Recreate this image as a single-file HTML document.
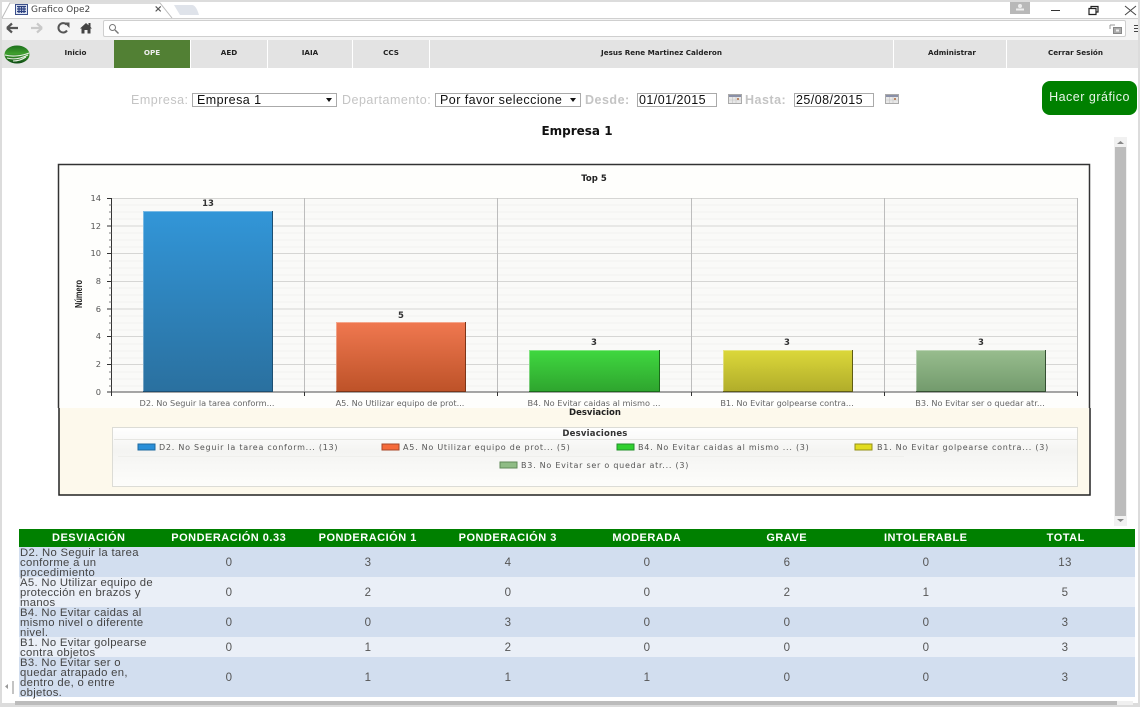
<!DOCTYPE html>
<html><head><meta charset="utf-8"><style>
*{box-sizing:border-box}
html,body{margin:0;padding:0;width:1140px;height:707px;overflow:hidden;background:#fff;font-family:"Liberation Sans",sans-serif}
.a{position:absolute}
.nav{position:absolute;top:40px;height:28px;background:#e3e3e3;font:bold 7.2px/25px "DejaVu Sans",sans-serif;text-align:center;color:#222}
.lb{position:absolute;top:93px;font-size:12.5px;line-height:14px;color:#c4c4c4;letter-spacing:.5px}
.sel{position:absolute;top:93px;height:14px;background:#fff;border:1px solid #aaa;font-size:12.5px;line-height:12px;padding-left:4px;color:#111;letter-spacing:.45px}
.sel i{position:absolute;right:4px;top:4px;width:0;height:0;border:3px solid transparent;border-top:4px solid #111;border-bottom:0}
.th{position:absolute;top:529px;height:18px;width:139.5px;text-align:center;color:#fff;font-weight:bold;font-size:11px;line-height:18px;letter-spacing:.5px}
.r{position:absolute;left:19px;width:1116px}
.t{position:absolute;left:20px;font-size:11.3px;line-height:10px;color:#444;letter-spacing:.32px;white-space:nowrap}
.n{position:absolute;width:40px;text-align:center;font-size:11.5px;line-height:12px;color:#555;letter-spacing:.3px}
</style></head><body>
<div class="a" style="left:0;top:0;width:1140px;height:2px;background:#dcdcdc"></div>
<div class="a" style="left:0;top:0;width:2px;height:707px;background:#dcdcdc"></div>
<div class="a" style="left:1138px;top:0;width:2px;height:707px;background:#dcdcdc"></div>
<div class="a" style="left:0;top:703px;width:1140px;height:4px;background:#dcdcdc"></div>
<!-- tab strip -->
<div class="a" style="left:2px;top:18px;width:1136px;height:22px;background:#f4f4f4;border-top:1px solid #d0d0d0"></div>
<svg class="a" style="left:0;top:2px" width="210" height="18"><path d="M2 16 L10 1 H160 L172 16" fill="#fff" stroke="#bbb"/><path d="M174 3 H192 Q196 3 199 13 H180 Z" fill="#dfe3ea"/></svg>
<svg class="a" style="left:15px;top:4px" width="13" height="11"><rect x=".5" y=".5" width="12" height="10" fill="#dfe6f2" stroke="#3b4f8a"/><path d="M2 2.5H11M2 5H11M2 7.5H11M4 2V9M6.500 2V9M9 2V9" stroke="#2a3f80" stroke-width="1.200"/></svg>
<div class="a" style="left:31px;top:4px;font:9px/12px 'DejaVu Sans',sans-serif;color:#444">Grafico Ope2</div>
<div class="a" style="left:154px;top:4px;font:bold 10px/12px 'DejaVu Sans',sans-serif;color:#555">×</div>
<div class="a" style="left:1010px;top:2px;width:20px;height:12px;background:#b8b8b8"></div>
<svg class="a" style="left:1014px;top:3px" width="12" height="9"><circle cx="6" cy="3" r="2" fill="#eee"/><rect x="2" y="5.500" width="8" height="2" fill="#eee"/></svg>
<svg class="a" style="left:1048px;top:4px" width="90" height="12"><path d="M3 6.500H12" stroke="#333"/><path d="M41 4.500H48V10.500H41ZM43 4V2.500H50V8H48" fill="none" stroke="#222" stroke-width="1.200"/><path d="M77 2L88 11M88 2L77 11" stroke="#444"/></svg>
<!-- toolbar -->
<svg class="a" style="left:4px;top:20px" width="92" height="16"><path d="M3 8H14M3 8L8 3.500M3 8L8 12.500" stroke="#555" stroke-width="2.200" fill="none"/><path d="M27 8H38M38 8L33 3.500M38 8L33 12.500" stroke="#c9c9c9" stroke-width="2.200" fill="none"/><path d="M62.500 4.500A4.700 4.700 0 1 0 63 10.500" stroke="#555" stroke-width="2" fill="none"/><path d="M60 2.500L65.500 2.500L65.500 8Z" fill="#555"/><path d="M76 8.500L82 3L84.500 5.300V3H86.500V7L88 8.500H86.500V13.500H83.500V10H80.500V13.500H77.500V8.500Z" fill="#444"/></svg>
<div class="a" style="left:103px;top:20px;width:1023px;height:17px;background:#fff;border:1px solid #cfcfcf;border-radius:2px"></div>
<svg class="a" style="left:108px;top:23px" width="12" height="12"><circle cx="4.500" cy="4.500" r="3" fill="none" stroke="#777"/><path d="M7 7L10.500 10.500" stroke="#777" stroke-width="1.400"/></svg>
<svg class="a" style="left:1109px;top:24px" width="13" height="10"><rect x="4.500" y="3.500" width="8" height="6" fill="#aaa" stroke="#888"/><path d="M1 1H6M1 1V5" stroke="#999" fill="none"/><rect x="7" y="5.500" width="3" height="2" fill="#eee"/></svg>
<svg class="a" style="left:1134px;top:24px" width="4" height="10"><path d="M0 1.500H4M0 4.500H4M0 7.500H4" stroke="#444"/></svg>
<!-- nav -->
<div class="a" style="left:2px;top:40px;width:1136px;height:28px;background:#e3e3e3"></div>
<svg class="a" style="left:4px;top:45px" width="26" height="19"><defs><linearGradient id="lg" x1="0" y1="0" x2="0" y2="1"><stop offset="0" stop-color="#1c6f1c"/><stop offset=".45" stop-color="#3f9f2e"/><stop offset="1" stop-color="#0d4a12"/></linearGradient></defs><ellipse cx="13" cy="9.500" rx="12.500" ry="9" fill="url(#lg)"/><path d="M1 10C8 12 18 11 25 8M3 13C10 15 18 13 24 10M9 16C14 16 19 14 22 12" stroke="#e8eee4" stroke-width="1.100" fill="none"/></svg>
<div class="nav" style="left:38px;width:75px">Inicio</div>
<div class="nav" style="left:114px;width:76px;background:#528034;color:#eee">OPE</div>
<div class="nav" style="left:191px;width:76px">AED</div>
<div class="nav" style="left:268px;width:84px">IAIA</div>
<div class="nav" style="left:353px;width:76px">CCS</div>
<div class="nav" style="left:430px;width:463px">Jesus Rene Martinez Calderon</div>
<div class="nav" style="left:896px;width:112px">Administrar</div>
<div class="nav" style="left:1010px;width:131px;background:transparent">Cerrar Sesión</div>
<div class="a" style="left:190px;top:40px;width:1px;height:28px;background:#fff"></div>
<div class="a" style="left:267px;top:40px;width:1px;height:28px;background:#fff"></div>
<div class="a" style="left:352px;top:40px;width:1px;height:28px;background:#fff"></div>
<div class="a" style="left:429px;top:40px;width:1px;height:28px;background:#fff"></div>
<div class="a" style="left:893px;top:40px;width:1px;height:28px;background:#fff"></div>
<div class="a" style="left:1006px;top:40px;width:1px;height:28px;background:#fff"></div>
<!-- form -->
<div class="lb" style="left:131px">Empresa:</div>
<div class="sel" style="left:192px;width:145px">Empresa 1<i></i></div>
<div class="lb" style="left:342px">Departamento:</div>
<div class="sel" style="left:435px;width:146px">Por favor seleccione<i></i></div>
<div class="lb" style="left:585px;font-weight:bold">Desde:</div>
<div class="sel" style="left:637px;width:80px;padding-left:1px">01/01/2015</div>
<div class="lb" style="left:745px;font-weight:bold">Hasta:</div>
<div class="sel" style="left:794px;width:80px;padding-left:1px">25/08/2015</div>
<svg class="a" style="left:728px;top:94px" width="14" height="10"><rect x=".5" y=".5" width="13" height="9" fill="#e8e8e8" stroke="#aaa"/><rect x="1" y="1" width="12" height="2" fill="#8a90a8"/><path d="M4.500 3V9M8 3V9M1 6H13" stroke="#c4c4c4" stroke-width=".6"/><rect x="9" y="4" width="2" height="2" fill="#b86"/></svg>
<svg class="a" style="left:885px;top:94px" width="14" height="10"><rect x=".5" y=".5" width="13" height="9" fill="#e8e8e8" stroke="#aaa"/><rect x="1" y="1" width="12" height="2" fill="#8a90a8"/><path d="M4.500 3V9M8 3V9M1 6H13" stroke="#c4c4c4" stroke-width=".6"/><rect x="9" y="4" width="2" height="2" fill="#b86"/></svg>
<div class="a" style="left:1042px;top:81px;width:95px;height:34px;background:#008000;border-radius:8px;color:#e8f4e8;font-size:12.500px;line-height:32px;text-align:center;letter-spacing:.5px">Hacer gráfico</div>
<div class="a" style="left:0;top:124px;width:1154px;text-align:center;font:bold 12px/14px 'DejaVu Sans',sans-serif;color:#111">Empresa 1</div>
<!-- scrollbar -->
<div class="a" style="left:1114px;top:137px;width:13px;height:389px;background:#f1f1f1"></div>
<div class="a" style="left:1115px;top:147px;width:11px;height:369px;background:#bcbcbc"></div>
<svg class="a" style="left:1116px;top:140px" width="9" height="5"><path d="M1 4L4.500 1L8 4Z" fill="#888"/></svg>
<svg class="a" style="left:1116px;top:518px" width="9" height="5"><path d="M1 1L4.500 4L8 1Z" fill="#888"/></svg>
<!-- chart -->
<svg class="a" style="left:0;top:0" width="1140" height="707" font-family="DejaVu Sans, sans-serif">
<defs>
<linearGradient id="b1" x1="0" y1="0" x2="0" y2="1"><stop offset="0" stop-color="#3296d8"/><stop offset="1" stop-color="#2a709f"/></linearGradient>
<linearGradient id="b2" x1="0" y1="0" x2="0" y2="1"><stop offset="0" stop-color="#f07850"/><stop offset="1" stop-color="#bd5228"/></linearGradient>
<linearGradient id="b3" x1="0" y1="0" x2="0" y2="1"><stop offset="0" stop-color="#40d840"/><stop offset="1" stop-color="#2ea42e"/></linearGradient>
<linearGradient id="b4" x1="0" y1="0" x2="0" y2="1"><stop offset="0" stop-color="#dcd83a"/><stop offset="1" stop-color="#b0ac2a"/></linearGradient>
<linearGradient id="b5" x1="0" y1="0" x2="0" y2="1"><stop offset="0" stop-color="#98bd8e"/><stop offset="1" stop-color="#729a6c"/></linearGradient>
<linearGradient id="lgb" x1="0" y1="0" x2="0" y2="1"><stop offset="0" stop-color="#fff"/><stop offset=".4" stop-color="#f4f4f2"/><stop offset="1" stop-color="#fdfdfb"/></linearGradient>
</defs>
<rect x="59" y="165" width="1030" height="243" fill="#fefefc"/>
<rect x="59" y="408" width="1030" height="87" fill="#fdf9ec"/>
<path d="M58.500 408V164.500H1089.500V408" fill="none" stroke="#333" stroke-width="1.500"/>
<path d="M59 408V495H1090V408" fill="none" stroke="#222" stroke-width="1.500"/>
<text x="594" y="181" font-size="8.500" font-weight="bold" text-anchor="middle" fill="#222">Top 5</text>
<rect x="112" y="198" width="966" height="194" fill="#fafaf8"/>
<g stroke="#f2f2f0"><path d="M112 205H1078M112 212H1078M112 219H1078M112 233H1078M112 240H1078M112 247H1078M112 261H1078M112 268H1078M112 275H1078M112 288H1078M112 295H1078M112 302H1078M112 316H1078M112 323H1078M112 330H1078M112 344H1078M112 351H1078M112 358H1078M112 372H1078M112 379H1078M112 386H1078"/></g>
<g stroke="#d6d6d4"><path d="M112 198.500H1078M112 226H1078M112 253.500H1078M112 281.500H1078M112 309H1078M112 336.500H1078M112 364.500H1078"/></g>
<path d="M304.500 198V392M497.500 198V392M691.500 198V392M884.500 198V392M1077.500 198V392" stroke="#bdbdbd"/>
<path d="M112 392H1078" stroke="#888" stroke-width="1.500"/>
<path d="M111.500 198V396M304.500 392V396M497.500 392V396M691.500 392V396M884.500 392V396M1077.500 392V396" stroke="#333"/>
<path d="M107 198.500H112M107 226H112M107 253.500H112M107 281.500H112M107 309H112M107 336.500H112M107 364.500H112M107 392H112" stroke="#333"/>
<path d="M109 205H112M109 212H112M109 219H112M109 233H112M109 240H112M109 247H112M109 261H112M109 268H112M109 275H112M109 288H112M109 295H112M109 302H112M109 316H112M109 323H112M109 330H112M109 344H112M109 351H112M109 358H112M109 372H112M109 379H112M109 386H112" stroke="#555" stroke-width=".7"/>
<g font-size="8.300" fill="#555" text-anchor="end"><text x="101" y="201">14</text><text x="101" y="229">12</text><text x="101" y="256">10</text><text x="101" y="284">8</text><text x="101" y="312">6</text><text x="101" y="339">4</text><text x="101" y="367">2</text><text x="101" y="395">0</text></g>
<text x="0" y="0" transform="translate(82,308) rotate(-90)" font-family="Liberation Sans, sans-serif" font-size="10" font-weight="bold" fill="#222" textLength="28" lengthAdjust="spacingAndGlyphs">Número</text>
<rect x="143" y="211" width="130" height="181" fill="url(#b1)"/>
<rect x="336" y="322" width="130" height="70" fill="url(#b2)"/>
<rect x="529" y="350" width="131" height="42" fill="url(#b3)"/>
<rect x="723" y="350" width="130" height="42" fill="url(#b4)"/>
<rect x="916" y="350" width="130" height="42" fill="url(#b5)"/>
<g fill="none" stroke="#fff" stroke-opacity=".35"><path d="M143.500 392V211.500H272M336.500 392V322.500H465M529.500 392V350.500H659M723.500 392V350.500H852M916.500 392V350.500H1045"/></g>
<path d="M143 391.500H272.500V211" fill="none" stroke="#1d4f72"/>
<path d="M336 391.500H465.500V322" fill="none" stroke="#7c3518"/>
<path d="M529 391.500H659.500V350" fill="none" stroke="#1a6a1a"/>
<path d="M723 391.500H852.500V350" fill="none" stroke="#5f5c14"/>
<path d="M916 391.500H1045.500V350" fill="none" stroke="#354f32"/>
<g font-size="8.500" font-weight="bold" fill="#333" text-anchor="middle"><text x="208" y="206">13</text><text x="401" y="318">5</text><text x="594" y="345">3</text><text x="787" y="345">3</text><text x="981" y="345">3</text></g>
<g font-size="8.200" fill="#666" text-anchor="middle"><text x="207" y="406">D2. No Seguir la tarea conform...</text><text x="400" y="406">A5. No Utilizar equipo de prot...</text><text x="594" y="406">B4. No Evitar caidas al mismo ...</text><text x="787" y="406">B1. No Evitar golpearse contra...</text><text x="980" y="406">B3. No Evitar ser o quedar atr...</text></g>
<text x="595" y="415" font-size="8.500" font-weight="bold" text-anchor="middle" fill="#222">Desviacion</text>
<rect x="112.500" y="427.500" width="965" height="59" fill="url(#lgb)" stroke="#dcdcd6"/>
<text x="595" y="436" font-size="8.500" font-weight="bold" text-anchor="middle" fill="#333" letter-spacing=".2">Desviaciones</text>
<path d="M114 439.500H1077" stroke="#e6e6e2"/><path d="M118 456.500H904" stroke="#efefec"/>
<rect x="138" y="444" width="17" height="6" fill="#2a8fd8" stroke="#1f6a9f"/>
<rect x="382" y="444" width="17" height="6" fill="#f56a3a" stroke="#a8482a"/>
<rect x="617" y="444" width="17" height="6" fill="#30d030" stroke="#22902a"/>
<rect x="855" y="444" width="17" height="6" fill="#e2dc20" stroke="#948f18"/>
<rect x="500" y="462" width="17" height="6" fill="#8fbc85" stroke="#5f8a58"/>
<g font-size="8" fill="#555" letter-spacing=".75"><text x="159" y="450">D2. No Seguir la tarea conform... (13)</text><text x="403" y="450">A5. No Utilizar equipo de prot... (5)</text><text x="638" y="450">B4. No Evitar caidas al mismo ... (3)</text><text x="877" y="450">B1. No Evitar golpearse contra... (3)</text><text x="521" y="468">B3. No Evitar ser o quedar atr... (3)</text></g>
</svg>
<!-- table -->
<div class="r" style="top:529px;height:18px;background:#008000"></div>
<div class="r" style="top:547px;height:30px;background:#d2deef"></div>
<div class="r" style="top:577px;height:30px;background:#eaeff7"></div>
<div class="r" style="top:607px;height:30px;background:#d2deef"></div>
<div class="r" style="top:637px;height:20px;background:#eaeff7"></div>
<div class="r" style="top:657px;height:40px;background:#d2deef"></div>
<div class="th" style="left:19px">DESVIACIÓN</div>
<div class="th" style="left:159px">PONDERACIÓN 0.33</div>
<div class="th" style="left:298px">PONDERACIÓN 1</div>
<div class="th" style="left:438px">PONDERACIÓN 3</div>
<div class="th" style="left:577px">MODERADA</div>
<div class="th" style="left:717px">GRAVE</div>
<div class="th" style="left:856px">INTOLERABLE</div>
<div class="th" style="left:996px">TOTAL</div>
<div class="t" style="top:548px">D2. No Seguir la tarea<br>conforme a un<br>procedimiento</div>
<div class="t" style="top:578px">A5. No Utilizar equipo de<br>protección en brazos y<br>manos</div>
<div class="t" style="top:608px">B4. No Evitar caidas al<br>mismo nivel o diferente<br>nivel.</div>
<div class="t" style="top:638px">B1. No Evitar golpearse<br>contra objetos</div>
<div class="t" style="top:658px">B3. No Evitar ser o<br>quedar atrapado en,<br>dentro de, o entre<br>objetos.</div>
<div class="n" style="left:209px;top:557px">0</div><div class="n" style="left:348px;top:557px">3</div><div class="n" style="left:488px;top:557px">4</div><div class="n" style="left:627px;top:557px">0</div><div class="n" style="left:767px;top:557px">6</div><div class="n" style="left:906px;top:557px">0</div><div class="n" style="left:1045px;top:557px">13</div>
<div class="n" style="left:209px;top:587px">0</div><div class="n" style="left:348px;top:587px">2</div><div class="n" style="left:488px;top:587px">0</div><div class="n" style="left:627px;top:587px">0</div><div class="n" style="left:767px;top:587px">2</div><div class="n" style="left:906px;top:587px">1</div><div class="n" style="left:1045px;top:587px">5</div>
<div class="n" style="left:209px;top:617px">0</div><div class="n" style="left:348px;top:617px">0</div><div class="n" style="left:488px;top:617px">3</div><div class="n" style="left:627px;top:617px">0</div><div class="n" style="left:767px;top:617px">0</div><div class="n" style="left:906px;top:617px">0</div><div class="n" style="left:1045px;top:617px">3</div>
<div class="n" style="left:209px;top:642px">0</div><div class="n" style="left:348px;top:642px">1</div><div class="n" style="left:488px;top:642px">2</div><div class="n" style="left:627px;top:642px">0</div><div class="n" style="left:767px;top:642px">0</div><div class="n" style="left:906px;top:642px">0</div><div class="n" style="left:1045px;top:642px">3</div>
<div class="n" style="left:209px;top:672px">0</div><div class="n" style="left:348px;top:672px">1</div><div class="n" style="left:488px;top:672px">1</div><div class="n" style="left:627px;top:672px">1</div><div class="n" style="left:767px;top:672px">0</div><div class="n" style="left:906px;top:672px">0</div><div class="n" style="left:1045px;top:672px">3</div>
<!-- bottom scrollbar -->
<div class="a" style="left:15px;top:701px;width:1102px;height:4px;background:#bcbcbc"></div>
<div class="a" style="left:1117px;top:701px;width:16px;height:4px;background:#f0f0f0"></div>
<div class="a" style="left:12px;top:681px;width:2px;height:13px;background:#c4c4c4"></div>
<svg class="a" style="left:4px;top:683px" width="5" height="7"><path d="M4 1L1 3.500L4 6Z" fill="#999"/></svg>
</body></html>
